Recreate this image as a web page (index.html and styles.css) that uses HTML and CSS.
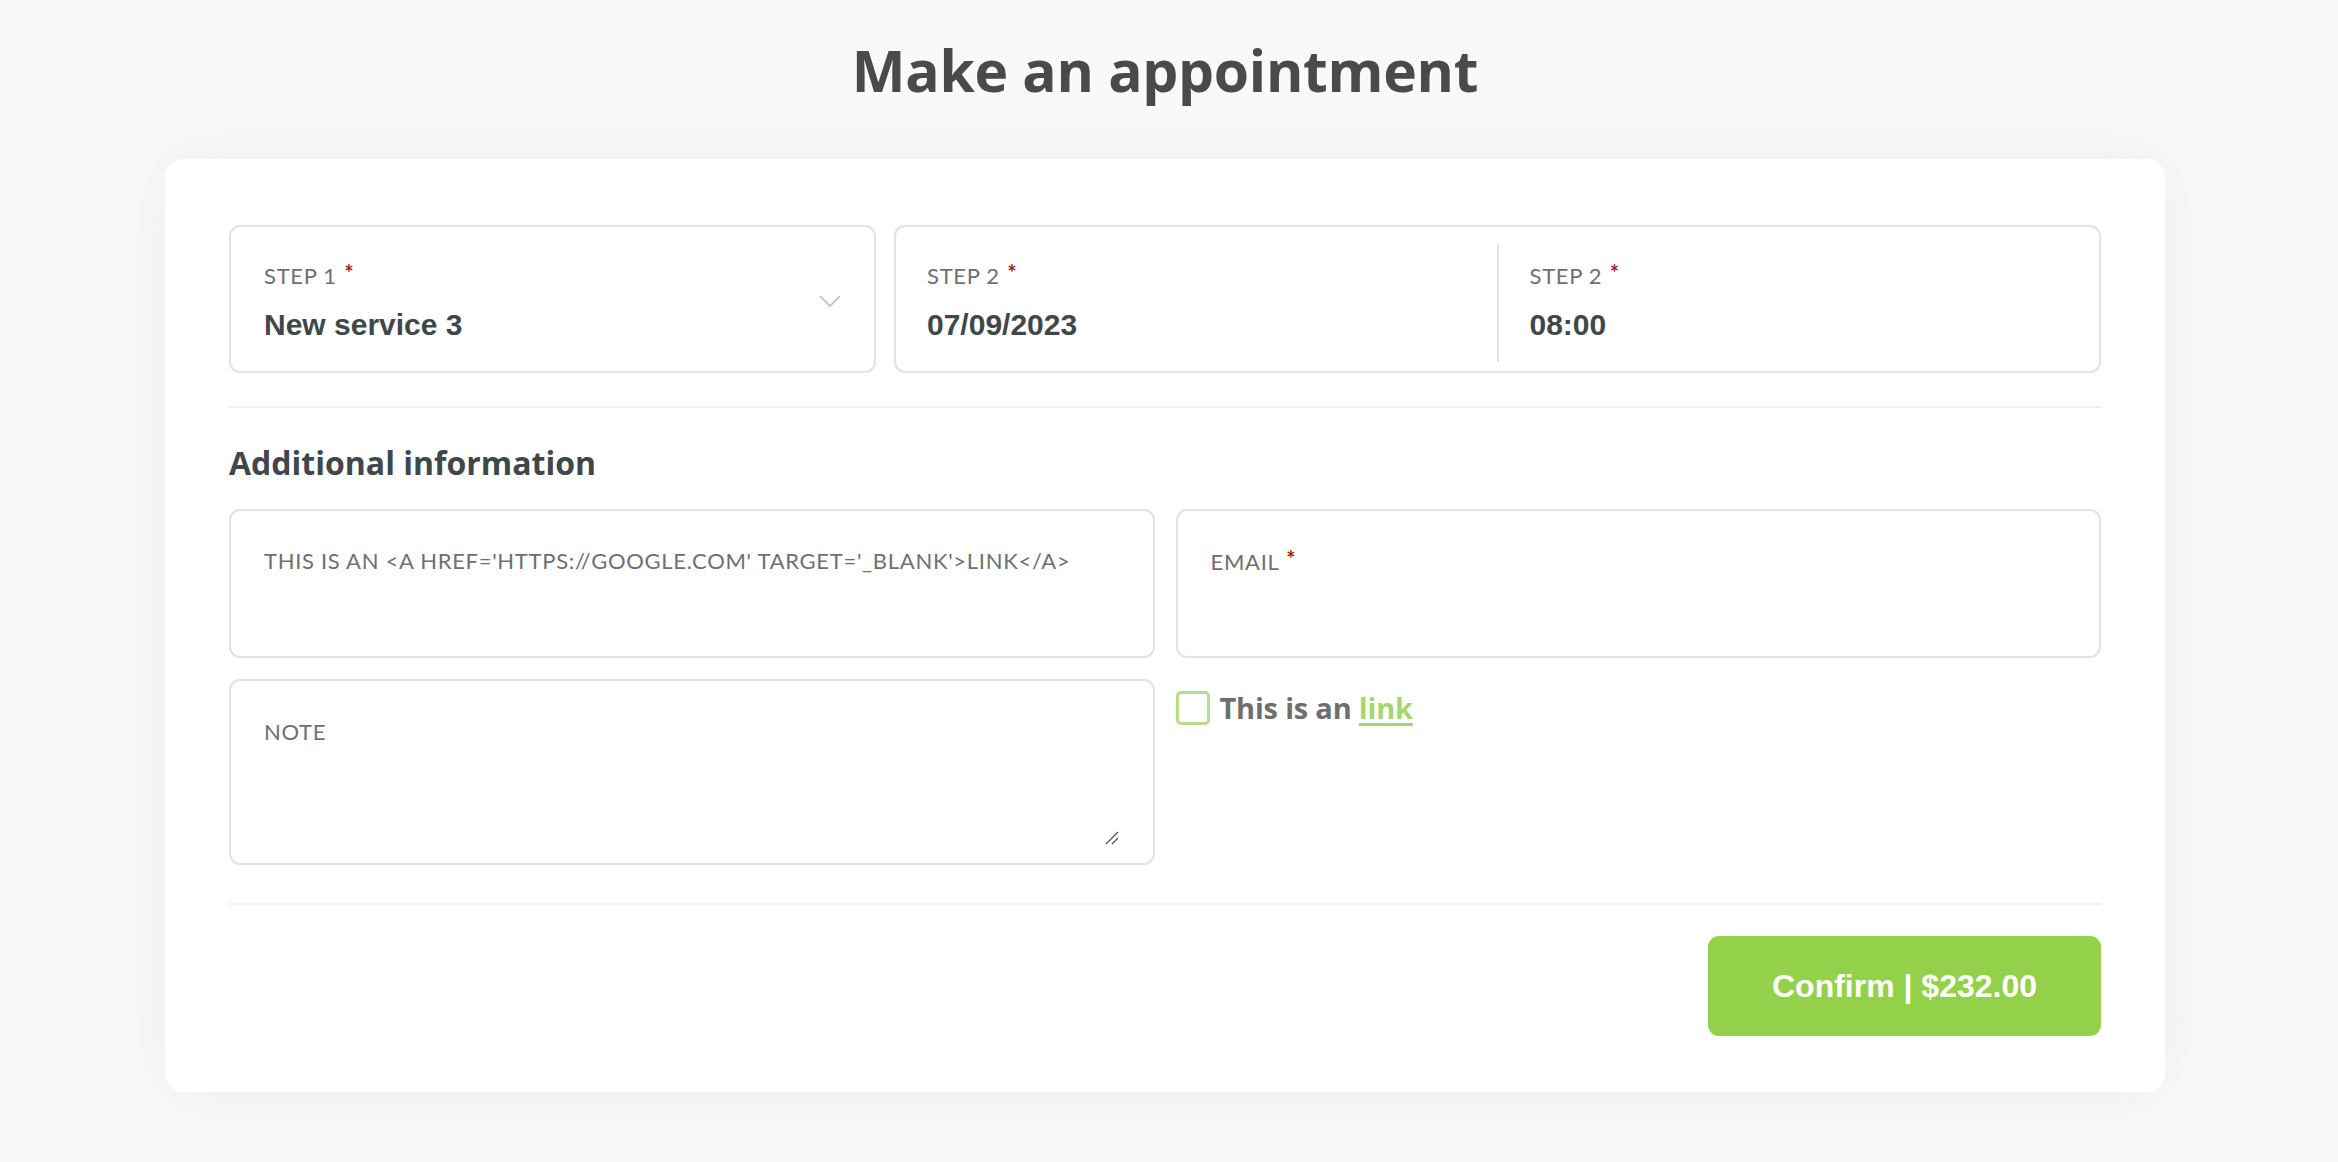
FILE: index.html
```html
<!DOCTYPE html>
<html lang="en">
<head>
<meta charset="utf-8">
<title>Make an appointment</title>
<link rel="stylesheet" href="styles.css">
</head>
<body>
<h1 class="title">Make an appointment</h1>
<main class="card">
  <section class="steps">
    <div class="box step-one">
      <div class="box-text">
        <div class="label">STEP 1 <span class="req">*</span></div>
        <div class="value">New service 3</div>
      </div>
      <svg class="chevron" width="24" height="16" viewBox="0 0 24 16"><path d="M2 3 L12 13 L22 3" fill="none" stroke="#bcbcbc" stroke-width="1.6"/></svg>
    </div>
    <div class="box step-two">
      <div class="half">
        <div class="label">STEP 2 <span class="req">*</span></div>
        <div class="value">07/09/2023</div>
      </div>
      <div class="vline"></div>
      <div class="half">
        <div class="label">STEP 2 <span class="req">*</span></div>
        <div class="value">08:00</div>
      </div>
    </div>
  </section>
  <hr class="divider">
  <h2 class="heading">Additional information</h2>
  <section class="info">
    <div class="col">
      <div class="field field-short">
        <div class="label">THIS IS AN &lt;A HREF='HTTPS://GOOGLE.COM' TARGET='_BLANK'&gt;LINK&lt;/A&gt;</div>
      </div>
      <div class="field field-note">
        <div class="label">NOTE</div>
        <svg class="grip" width="16" height="16" viewBox="0 0 16 16"><path d="M15 3 L3 15 M15 9 L9 15" stroke="#555" stroke-width="1.3" fill="none"/></svg>
      </div>
    </div>
    <div class="col">
      <div class="field field-short">
        <div class="label">EMAIL <span class="req">*</span></div>
      </div>
      <label class="check">
        <span class="checkbox"></span>
        <span class="check-text">This is an <a class="link" href="#">link</a></span>
      </label>
    </div>
  </section>
  <hr class="divider divider-bottom">
  <div class="actions">
    <button class="confirm">Confirm | $232.00</button>
  </div>
</main>
</body>
</html>
```

FILE: styles.css
```css
* { box-sizing: border-box; }

html, body {
  margin: 0;
  padding: 0;
  background: #f9f9f9;
}

body {
  font-family: Lato, "Open Sans", sans-serif;
  color: #4a4a4a;
  padding: 0 8px 40px 0;
}

.title {
  margin: 36px 0 55px;
  text-align: center;
  font-family: "Open Sans", sans-serif;
  font-weight: 700;
  font-size: 57px;
  line-height: 1.2;
  letter-spacing: -0.3px;
  color: #4a4a4a;
}

.card {
  width: 2000px;
  margin: 0 auto;
  background: #ffffff;
  border-radius: 18px;
  box-shadow: 0 0 70px rgba(0, 0, 0, 0.055);
  padding: 66px 64px 56px;
}

.steps {
  display: flex;
  gap: 18px;
}

.box {
  height: 148px;
  border: 2px solid #e2e2e2;
  border-radius: 11px;
  background: #fff;
}

.step-one {
  flex: 0 0 647px;
  display: flex;
  align-items: flex-start;
  padding: 35px 32px 0 33px;
}

.box-text {
  flex: 1;
}

.chevron {
  margin-top: 31px;
}

.step-two {
  flex: 1;
  display: flex;
  align-items: stretch;
}

.half {
  flex: 1;
  padding: 35px 32px 0 31px;
}

.vline {
  width: 2px;
  background: #e4e4e4;
  margin: 16px 0 9px;
}

.label {
  font-family: Lato, sans-serif;
  font-size: 22px;
  line-height: 1.2;
  letter-spacing: 0.7px;
  color: #6f6f6f;
  white-space: nowrap;
}

.req {
  color: #a3221a;
  font-size: 22px;
  font-weight: 700;
  vertical-align: 3px;
  margin-left: 1px;
  line-height: 1;
}

.value {
  margin-top: 17px;
  font-family: "Liberation Sans", Arial, sans-serif;
  font-weight: 700;
  font-size: 30px;
  line-height: 1.2;
  color: #40474b;
}

.divider {
  border: 0;
  height: 2px;
  background: #efefef;
  margin: 33px 0 0;
}

.heading {
  margin: 35px 0 26px;
  font-family: "Open Sans", sans-serif;
  font-weight: 700;
  font-size: 32px;
  line-height: 1.25;
  letter-spacing: 0;
  color: #40474b;
}

.info {
  display: grid;
  grid-template-columns: 1fr 1fr;
  gap: 21px;
}

.col {
  display: flex;
  flex-direction: column;
  gap: 21px;
}

.field {
  border: 2px solid #e2e2e2;
  border-radius: 11px;
  padding: 37px 32px 0 33px;
  display: flex;
  flex-direction: column;
}

.field-short {
  height: 149px;
}

.field-note {
  height: 186px;
  padding-top: 38px;
  padding-bottom: 18px;
}

.grip {
  margin-top: auto;
  align-self: flex-end;
  margin-right: 2px;
}

.check {
  display: flex;
  align-items: center;
  gap: 10px;
  margin-top: 9px;
}

.checkbox {
  flex: 0 0 auto;
  width: 34px;
  height: 34px;
  border: 3px solid #b6dd8d;
  border-radius: 5px;
  background: #fff;
}

.check-text {
  font-family: "Open Sans", sans-serif;
  font-weight: 700;
  font-size: 29px;
  letter-spacing: -0.2px;
  color: #6e6e6e;
}

.link {
  color: #a7d56f;
  text-decoration: underline;
  text-decoration-thickness: 3px;
  text-underline-offset: 4px;
}

.divider-bottom {
  margin-top: 38px;
}

.actions {
  display: flex;
  justify-content: flex-end;
  margin-top: 31px;
}

.confirm {
  width: 393px;
  height: 100px;
  border: 0;
  border-radius: 11px;
  background: #94d14a;
  color: #ffffff;
  font-family: "Liberation Sans", Arial, sans-serif;
  font-weight: 700;
  font-size: 32px;
  cursor: pointer;
}
```
